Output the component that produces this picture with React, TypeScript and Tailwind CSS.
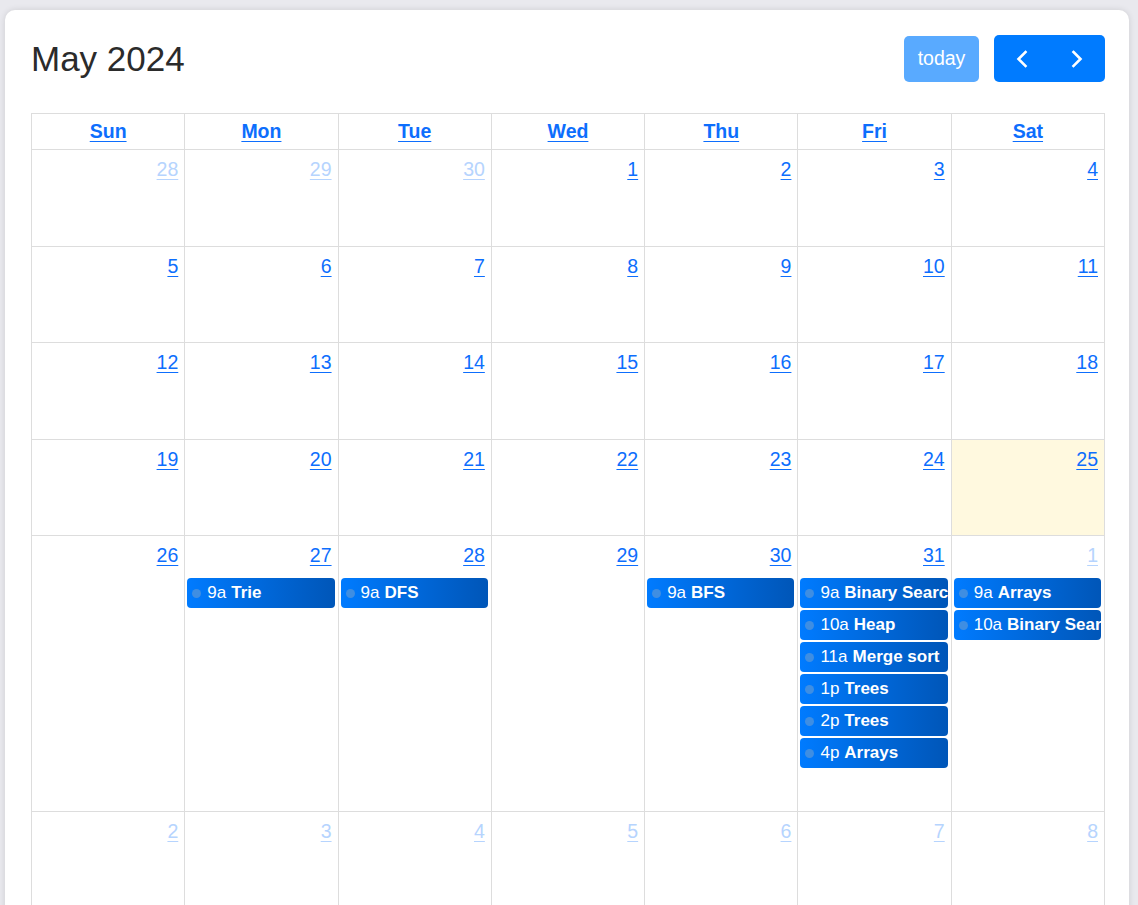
import React from "react";

type Ev = { t: string; n: string };
type Day = { d: number; other?: boolean; today?: boolean; events?: Ev[] };

const weeks: Day[][] = [
  [{ d: 28, other: true }, { d: 29, other: true }, { d: 30, other: true }, { d: 1 }, { d: 2 }, { d: 3 }, { d: 4 }],
  [{ d: 5 }, { d: 6 }, { d: 7 }, { d: 8 }, { d: 9 }, { d: 10 }, { d: 11 }],
  [{ d: 12 }, { d: 13 }, { d: 14 }, { d: 15 }, { d: 16 }, { d: 17 }, { d: 18 }],
  [{ d: 19 }, { d: 20 }, { d: 21 }, { d: 22 }, { d: 23 }, { d: 24 }, { d: 25, today: true }],
  [
    { d: 26 },
    { d: 27, events: [{ t: "9a", n: "Trie" }] },
    { d: 28, events: [{ t: "9a", n: "DFS" }] },
    { d: 29 },
    { d: 30, events: [{ t: "9a", n: "BFS" }] },
    {
      d: 31,
      events: [
        { t: "9a", n: "Binary Search" },
        { t: "10a", n: "Heap" },
        { t: "11a", n: "Merge sort" },
        { t: "1p", n: "Trees" },
        { t: "2p", n: "Trees" },
        { t: "4p", n: "Arrays" },
      ],
    },
    {
      d: 1,
      other: true,
      events: [
        { t: "9a", n: "Arrays" },
        { t: "10a", n: "Binary Search" },
      ],
    },
  ],
  [{ d: 2, other: true }, { d: 3, other: true }, { d: 4, other: true }, { d: 5, other: true }, { d: 6, other: true }, { d: 7, other: true }, { d: 8, other: true }],
];

const heads = ["Sun", "Mon", "Tue", "Wed", "Thu", "Fri", "Sat"];

function Event({ e }: { e: Ev }) {
  return (
    <div className="ml-[2px] mr-[3px] flex h-[30px] items-center overflow-hidden whitespace-nowrap rounded-[4px] bg-linear-to-r from-[#007bff] to-[#0056b8] text-[17px] text-white">
      <span className="ml-[5px] mr-[6px] h-[9px] w-[9px] shrink-0 rounded-full bg-[#3f8ee2]" />
      <span>{e.t}</span>
      <span className="ml-[5px] font-bold">{e.n}</span>
    </div>
  );
}

export default function App() {
  return (
    <div className="min-h-screen bg-[#e9e9ee] pt-[10px] font-['Liberation_Sans',Arial,sans-serif]">
      <div className="ml-[5px] w-[1124px] rounded-t-[10px] bg-white pl-[26px] pr-[24px] pt-[25px] pb-[30px] shadow-[0_0_6px_rgba(0,0,0,0.12)]">
        <div className="mb-[31px] flex h-[47px] items-center justify-between">
          <h2 className="text-[35px] leading-none text-[#2b2b2b]">May 2024</h2>
          <div className="flex items-center gap-[15px]">
            <button className="flex h-[46px] w-[75px] items-center justify-center rounded-[5px] bg-[#59aaff] text-[19.5px] text-white">
              today
            </button>
            <div className="flex h-[47px] w-[111px] overflow-hidden rounded-[5px] bg-[#007bff]">
              <button className="flex flex-1 items-center justify-center">
                <svg width="14" height="18" viewBox="0 0 14 18" fill="none">
                  <path d="M10.5 2 L3.5 9 L10.5 16" stroke="white" strokeWidth="2.6" strokeLinecap="square" />
                </svg>
              </button>
              <button className="flex flex-1 items-center justify-center">
                <svg width="14" height="18" viewBox="0 0 14 18" fill="none">
                  <path d="M3.5 2 L10.5 9 L3.5 16" stroke="white" strokeWidth="2.6" strokeLinecap="square" />
                </svg>
              </button>
            </div>
          </div>
        </div>

        <div className="border-l border-t border-[#dddddd] text-[19.5px]">
          <div className="grid grid-cols-7">
            {heads.map((h) => (
              <div key={h} className="flex h-[36px] items-center justify-center border-b border-r border-[#dddddd]">
                <a className="font-bold text-[#0d6efd] underline underline-offset-[3px]">{h}</a>
              </div>
            ))}
          </div>
          {weeks.map((w, i) => (
            <div key={i} className="grid grid-cols-7">
              {w.map((day, j) => (
                <div
                  key={j}
                  className={`flex min-h-[96.5px] flex-col border-b border-r border-[#dddddd] ${day.today ? "bg-[#fff9df]" : ""}`}
                >
                  <div className="flex justify-end px-[6px] pt-[5px] leading-[29px]">
                    <a className={`underline underline-offset-[3px] ${day.other ? "text-[#b6d4fe]" : "text-[#0d6efd]"}`}>{day.d}</a>
                  </div>
                  {i === 4 && (
                    <div className="mt-[8px] flex flex-col gap-[2px] pb-[43px]">
                      {(day.events || []).map((e, k) => (
                        <Event key={k} e={e} />
                      ))}
                    </div>
                  )}
                </div>
              ))}
            </div>
          ))}
        </div>
      </div>
    </div>
  );
}
